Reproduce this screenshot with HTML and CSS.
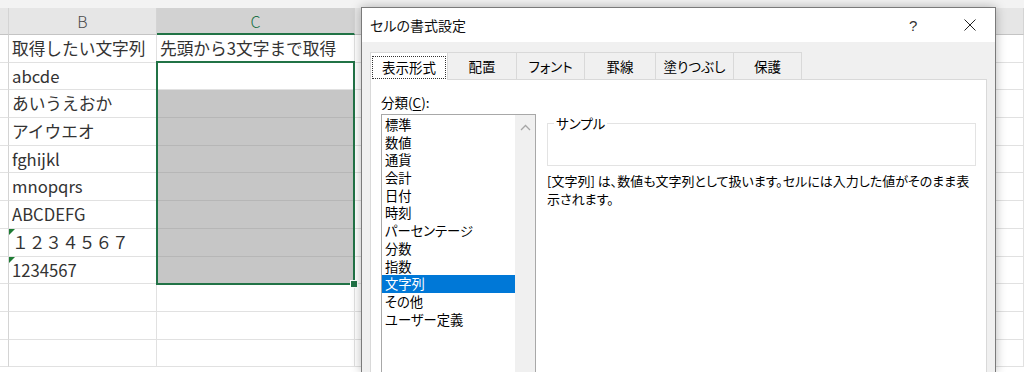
FILE: index.html
```html
<!DOCTYPE html>
<html lang="ja">
<head>
<meta charset="UTF-8" />
<title>セルの書式設定</title>
<link rel="stylesheet" href="styles.css">
</head>
<body>

<div class="sheet">
  <div class="strip"></div>

  <!-- worksheet grid -->
  <div class="grid">
    <div class="hd"></div><div class="hd">B</div><div class="hd hd-sel">C</div><div class="hd"></div>

    <div class="rh"></div><div class="cell">取得したい文字列</div><div class="cell">先頭から3文字まで取得</div><div class="cell"></div>
    <div class="rh"></div><div class="cell">abcde</div><div class="cell active"></div><div class="cell"></div>
    <div class="rh"></div><div class="cell">あいうえおか</div><div class="cell picked"></div><div class="cell"></div>
    <div class="rh"></div><div class="cell">アイウエオ</div><div class="cell picked"></div><div class="cell"></div>
    <div class="rh"></div><div class="cell">fghijkl</div><div class="cell picked"></div><div class="cell"></div>
    <div class="rh"></div><div class="cell">mnopqrs</div><div class="cell picked"></div><div class="cell"></div>
    <div class="rh"></div><div class="cell">ABCDEFG</div><div class="cell picked"></div><div class="cell"></div>
    <div class="rh"></div><div class="cell flag">１２３４５６７</div><div class="cell picked"></div><div class="cell"></div>
    <div class="rh"></div><div class="cell flag">1234567</div><div class="cell picked"></div><div class="cell"></div>
    <div class="rh"></div><div class="cell"></div><div class="cell"></div><div class="cell"></div>
    <div class="rh"></div><div class="cell"></div><div class="cell"></div><div class="cell"></div>
    <div class="rh"></div><div class="cell"></div><div class="cell"></div><div class="cell"></div>
  </div>

  <!-- range selection C2:C9 -->
  <div class="selection"><span class="fill-handle"></span></div>

  <!-- Format Cells dialog -->
  <div class="dialog">
    <div class="dlg-title">
      <span class="dlg-name">セルの書式設定</span>
      <span class="dlg-help">?</span>
      <span class="dlg-close">
        <svg width="12" height="12" viewBox="0 0 12 12"><path d="M0.5 0.5 L11.5 11.5 M11.5 0.5 L0.5 11.5" stroke="#222" stroke-width="1" fill="none"/></svg>
      </span>
    </div>
    <div class="dlg-body">
      <div class="tabs">
        <div class="tab tab-on"><span class="focus">表示形式</span></div>
        <div class="tab">配置</div>
        <div class="tab">フォント</div>
        <div class="tab">罫線</div>
        <div class="tab">塗りつぶし</div>
        <div class="tab">保護</div>
      </div>
      <div class="panel">
        <div class="cat-label">分類(<u>C</u>):</div>
        <div class="panel-row">
          <div class="listbox">
            <ul class="items">
              <li>標準</li>
              <li>数値</li>
              <li>通貨</li>
              <li>会計</li>
              <li>日付</li>
              <li>時刻</li>
              <li>パーセンテージ</li>
              <li>分数</li>
              <li>指数</li>
              <li class="item-on">文字列</li>
              <li>その他</li>
              <li>ユーザー定義</li>
            </ul>
            <div class="scroll">
              <svg width="11" height="7" viewBox="0 0 11 7"><path d="M1 6 L5.5 1.5 L10 6" stroke="#a6a6a6" stroke-width="1.3" fill="none"/></svg>
            </div>
          </div>
          <div class="detail">
            <fieldset class="sample">
              <legend>サンプル</legend>
            </fieldset>
            <p class="desc">[文字列] は、数値も文字列として扱います。セルには入力した値がそのまま表<br>示されます。</p>
          </div>
        </div>
      </div>
    </div>
  </div>
</div>

</body>
</html>
```

FILE: styles.css
```css
body {
  margin: 0;
  width: 1024px;
  height: 372px;
  overflow: hidden;
  background: #fff;
  font-family: "Noto Sans CJK JP", "Noto Sans", sans-serif;
}

.sheet {
  position: relative;
  width: 1024px;
  height: 372px;
  overflow: hidden;
}

.strip {
  height: 8px;
  background: #f3f3f3;
}

/* Worksheet */
.grid {
  display: grid;
  grid-template-columns: 9px 148px 198px 1fr;
  grid-template-rows: 27px repeat(12, 27.7px);
}
.grid > div {
  box-sizing: border-box;
  border-right: 1px solid #e1e1e1;
  border-bottom: 1px solid #e1e1e1;
}
.hd {
  background: #e6e6e6;
  border-right-color: #d4d4d4 !important;
  border-bottom-color: #c4c4c4 !important;
  color: #4a4a4a;
  font-size: 16px;
  font-weight: 300;
  text-align: center;
  line-height: 26px;
}
.hd-sel {
  background: #d2d2d2;
  color: #217346;
  border-bottom: 2px solid #217346 !important;
}
.rh {
  background: #fff;
  border-right-color: #d4d4d4 !important;
}
.cell {
  position: relative;
  padding-left: 3px;
  font-size: 16.7px;
  line-height: 27px;
  color: #333;
  white-space: nowrap;
  overflow: hidden;
}
.picked {
  background: #c6c6c6;
  border-bottom-color: #b6b6b6 !important;
}
.flag::before {
  content: "";
  position: absolute;
  left: 0;
  top: 0;
  border-top: 6px solid #1e7b34;
  border-right: 6px solid transparent;
}

.selection {
  position: absolute;
  left: 156px;
  top: 61px;
  width: 199px;
  height: 224px;
  box-sizing: border-box;
  border: 2px solid #217346;
}
.fill-handle {
  position: absolute;
  right: -5px;
  bottom: -5px;
  width: 6px;
  height: 6px;
  background: #217346;
  border: 1px solid #fff;
}

/* Dialog */
.dialog {
  position: absolute;
  left: 361px;
  top: 7px;
  width: 635px;
  height: 365px;
  box-sizing: border-box;
  border: 1px solid #7a7a7a;
  border-bottom: none;
  background: #f0f0f0;
  box-shadow: 0 0 10px rgba(0, 0, 0, 0.28);
  font-size: 13.5px;
  color: #000;
  font-feature-settings: "palt";
}
.dlg-title {
  display: flex;
  align-items: center;
  height: 34px;
  background: #fff;
  padding-left: 8px;
}
.dlg-name {
  flex: 1;
  font-size: 14px;
  color: #111;
}
.dlg-help {
  width: 14px;
  margin-right: 41px;
  font-size: 15px;
  color: #333;
  font-family: "Liberation Sans", sans-serif;
}
.dlg-close {
  display: flex;
  margin-right: 19px;
}
.dlg-body {
  padding: 10px 8px 0 8px;
}
.tabs {
  display: flex;
  height: 27px;
}
.tab {
  display: flex;
  align-items: center;
  justify-content: center;
  box-sizing: border-box;
  width: 69px;
  border: 1px solid #d9d9d9;
  border-bottom: none;
  border-left: none;
  background: #f0f0f0;
}
.tab:nth-child(2) { width: 69px; }
.tab:nth-child(3) { width: 68px; }
.tab:nth-child(4) { width: 71px; }
.tab:nth-child(5) { width: 78px; }
.tab:nth-child(6) { width: 68px; }
.tab-on {
  width: 78px;
  background: #fff;
  border-left: 1px solid #d9d9d9;
  position: relative;
  z-index: 1;
  margin-bottom: -1px;
  height: 28px;
}
.focus {
  display: block;
  box-sizing: border-box;
  width: 74px;
  height: 23px;
  line-height: 21px;
  text-align: center;
  border: 1px dotted #333;
  margin-top: 1px;
}

.panel {
  box-sizing: border-box;
  width: 617px;
  height: 293px;
  background: #fff;
  border: 1px solid #d9d9d9;
  border-bottom: none;
  padding: 13px 0 0 10px;
}
.cat-label {
  line-height: 18px;
  font-size: 13.5px;
}
.cat-label u {
  text-underline-offset: 2px;
}
.panel-row {
  display: flex;
  gap: 11px;
  margin-top: 3px;
}
.listbox {
  display: flex;
  box-sizing: border-box;
  width: 155px;
  height: 258px;
  border: 1px solid #a8a8a8;
  border-bottom: none;
}
.items {
  flex: 1;
  list-style: none;
  margin: 0;
  padding: 1px 0 0 0;
}
.items li {
  height: 17.7px;
  line-height: 17.7px;
  padding-left: 3px;
  font-size: 13.3px;
  white-space: nowrap;
}
.items .item-on {
  background: #0078d7;
  color: #fff;
}
.scroll {
  width: 20px;
  background: #f0f0f0;
  display: flex;
  justify-content: center;
  padding-top: 9px;
  box-sizing: border-box;
}
.scroll svg {
  display: block;
}

.detail {
  width: 429px;
  padding-top: 1px;
}
.sample {
  margin: 0;
  height: 51px;
  box-sizing: border-box;
  border: 1px solid #e3e3e3;
  padding: 0;
}
.sample legend {
  margin-left: 6px;
  padding: 0 2px;
  font-size: 13.5px;
  line-height: 16px;
}
.desc {
  margin: 6px 0 0 0;
  font-size: 13px;
  line-height: 18px;
  white-space: nowrap;
}
```
